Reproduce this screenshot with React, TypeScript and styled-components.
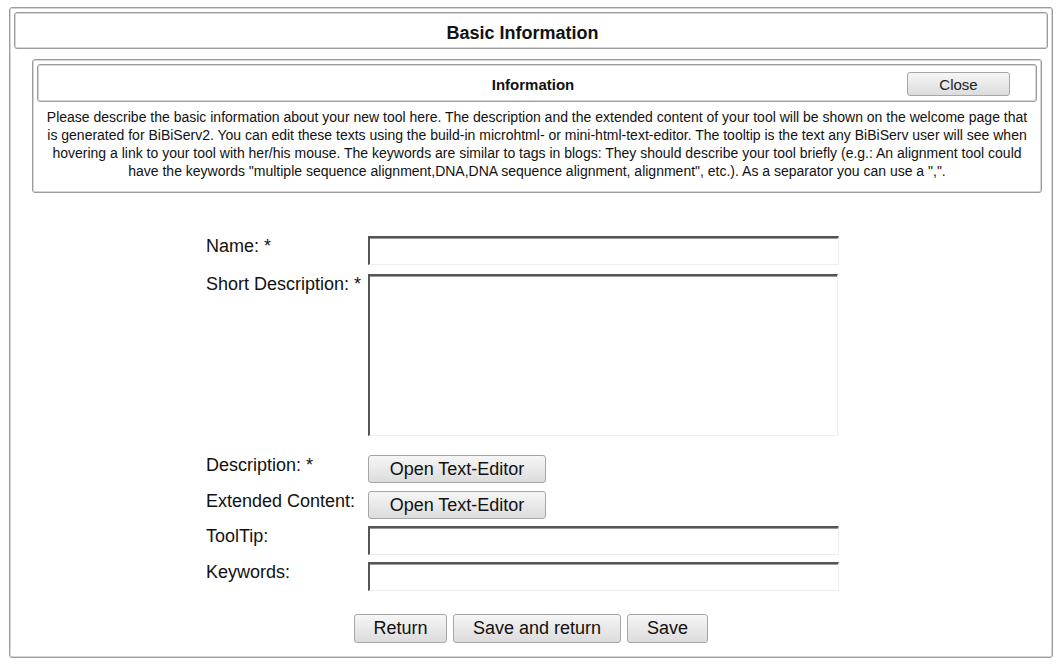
import React from "react";
import styled, { createGlobalStyle } from "styled-components";

const GlobalStyle = createGlobalStyle`
  html, body {
    margin: 0;
    padding: 0;
    background: #ffffff;
  }
  body {
    font-family: "Liberation Sans", Arial, sans-serif;
    color: #111;
  }
`;

const App = () => {
  return (
    <>
      <GlobalStyle />
      <Page>
        <Frame>
          <TitleBar>Basic Information</TitleBar>

          <InfoBox>
            <InfoHeader>
              <InfoTitle>Information</InfoTitle>
              <CloseButton>Close</CloseButton>
            </InfoHeader>
            <InfoText>
              Please describe the basic information about your new tool here. The description
              and the extended content of your tool will be shown on the welcome page that is
              generated for BiBiServ2. You can edit these texts using the build-in microhtml- or
              mini-html-text-editor. The tooltip is the text any BiBiServ user will see when
              hovering a link to your tool with her/his mouse. The keywords are similar to tags
              in blogs: They should describe your tool briefly (e.g.: An alignment tool could
              have the keywords "multiple sequence alignment,DNA,DNA sequence alignment,
              alignment", etc.). As a separator you can use a ",".
            </InfoText>
          </InfoBox>

          <Form>
            <Row $gap={9}>
              <Label>Name: *</Label>
              <TextInput />
            </Row>
            <Row $gap={19}>
              <Label>Short Description: *</Label>
              <TextArea />
            </Row>
            <Row $gap={8}>
              <Label>Description: *</Label>
              <EditorButton>Open Text-Editor</EditorButton>
            </Row>
            <Row $gap={7}>
              <Label>Extended Content:</Label>
              <EditorButton>Open Text-Editor</EditorButton>
            </Row>
            <Row $gap={7}>
              <Label>ToolTip:</Label>
              <TextInput />
            </Row>
            <Row $gap={0}>
              <Label>Keywords:</Label>
              <TextInput />
            </Row>
          </Form>

          <Actions>
            <ActionButton $w={93}>Return</ActionButton>
            <ActionButton $w={168}>Save and return</ActionButton>
            <ActionButton $w={81}>Save</ActionButton>
          </Actions>
        </Frame>
      </Page>
    </>
  );
};

const Page = styled.div`
  width: 1060px;
  height: 670px;
  padding: 7px 0 0 9px;
  box-sizing: border-box;
`;

const Frame = styled.div`
  width: 1044px;
  height: 651px;
  box-sizing: border-box;
  border: 1px solid #9c9c9c;
  box-shadow: inset 0 0 0 1px #d6d6d6;
  border-radius: 3px;
  padding: 4px 4px 0 4px;
`;

const TitleBar = styled.div`
  height: 37px;
  box-sizing: border-box;
  border: 1px solid #9c9c9c;
  box-shadow: inset 0 0 0 1px #d6d6d6;
  border-radius: 3px;
  display: flex;
  align-items: center;
  justify-content: center;
  padding: 5px 17px 0 0;
  font-size: 18px;
  font-weight: bold;
  color: #111;
`;

const InfoBox = styled.div`
  margin: 10px 6px 0 18px;
  height: 134px;
  box-sizing: border-box;
  border: 1px solid #9c9c9c;
  box-shadow: inset 0 0 0 1px #d6d6d6;
  border-radius: 3px;
  padding: 4px 4px 0 4px;
`;

const InfoHeader = styled.div`
  height: 38px;
  box-sizing: border-box;
  border: 1px solid #9c9c9c;
  box-shadow: inset 0 0 0 1px #d6d6d6;
  border-radius: 3px;
  display: flex;
  align-items: center;
  position: relative;
  justify-content: center;
  padding-right: 8px;
`;

const InfoTitle = styled.div`
  font-size: 15px;
  font-weight: bold;
  color: #111;
  margin-top: 3px;
`;

const CloseButton = styled.button`
  position: absolute;
  right: 26px;
  top: 7px;
  width: 103px;
  height: 24px;
  box-sizing: border-box;
  border: 1px solid #a6a6a6;
  border-radius: 3px;
  background: linear-gradient(#f6f6f6, #dcdcdc);
  font-family: "Liberation Sans", Arial, sans-serif;
  font-size: 15px;
  color: #222;
  padding: 0;
`;

const InfoText = styled.p`
  margin: 6px 8px 0 8px;
  font-size: 14px;
  line-height: 18px;
  text-align: center;
  color: #111;
`;

const Form = styled.div`
  margin: 43px 0 0 192px;
  display: flex;
  flex-direction: column;
`;

const Row = styled.div<{ $gap: number }>`
  display: flex;
  align-items: flex-start;
  margin-bottom: ${(p) => p.$gap}px;
`;

const Label = styled.div`
  width: 162px;
  font-size: 18px;
  line-height: 20px;
  color: #111;
`;

const TextInput = styled.input`
  width: 471px;
  height: 29px;
  box-sizing: border-box;
  border-style: solid;
  border-width: 2px 1px 1px 2px;
  border-color: #555 #eeeeee #eeeeee #555;
  box-shadow: inset 0 1px 0 #999;
  background: #fff;
  margin: 0;
  padding: 2px 4px;
  font-size: 15px;
  outline: none;
`;

const TextArea = styled.textarea`
  display: block;
  width: 470px;
  height: 162px;
  box-sizing: border-box;
  border-style: solid;
  border-width: 2px 1px 1px 2px;
  border-color: #555 #eeeeee #eeeeee #555;
  box-shadow: inset 0 1px 0 #999;
  background: #fff;
  margin: 0;
  resize: none;
  outline: none;
`;

const EditorButton = styled.button`
  width: 178px;
  height: 28px;
  box-sizing: border-box;
  border: 1px solid #a6a6a6;
  border-radius: 3px;
  background: linear-gradient(#f6f6f6, #dcdcdc);
  font-family: "Liberation Sans", Arial, sans-serif;
  font-size: 18px;
  color: #111;
  padding: 0;
  margin: 0;
`;

const Actions = styled.div`
  margin: 23px 0 0 0;
  display: flex;
  justify-content: center;
  gap: 6px;
  padding-left: 0;
`;

const ActionButton = styled.button<{ $w: number }>`
  width: ${(p) => p.$w}px;
  height: 29px;
  box-sizing: border-box;
  border: 1px solid #a6a6a6;
  border-radius: 3px;
  background: linear-gradient(#f6f6f6, #dcdcdc);
  font-family: "Liberation Sans", Arial, sans-serif;
  font-size: 18px;
  color: #111;
  padding: 0;
  margin: 0;
`;

export default App;
